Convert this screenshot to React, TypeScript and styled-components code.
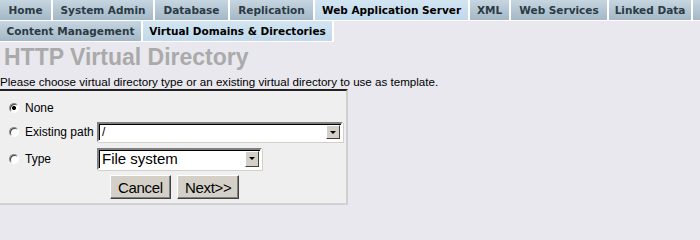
import React from "react";
import styled, { createGlobalStyle } from "styled-components";

const Global = createGlobalStyle`
  html, body { margin: 0; padding: 0; background: #e9e8ee; }
  body { font-family: "Liberation Sans", Arial, sans-serif; overflow: hidden; }
`;

const TabRow = styled.div`
  display: flex;
  height: 21px;
  white-space: nowrap;
  overflow: hidden;
`;

const Tab = styled.div<{ $active?: boolean; $w: number }>`
  flex: none;
  box-sizing: border-box;
  height: 21px;
  width: ${(p) => p.$w}px;
  text-align: center;
  line-height: 20px;
  font-family: "DejaVu Sans", Verdana, sans-serif;
  font-weight: bold;
  font-size: 10.5px;
  color: ${(p) => (p.$active ? "#000" : "#2b3a44")};
  border-right: 2px solid #fff;
  border-bottom: 1px solid #fff;
  overflow: hidden;
  background: ${(p) =>
    p.$active
      ? "linear-gradient(#d3e5f2, #c0d8ea)"
      : "linear-gradient(#c6d6e1, #a3b7c6)"};
`;

const Title = styled.h1`
  margin: 2px 0 0 4px;
  font-family: "Liberation Sans", Arial, sans-serif;
  font-size: 23px;
  font-weight: bold;
  color: #aaaaaa;
  line-height: 26px;
`;

const Intro = styled.p`
  margin: 5px 0 0 0;
  font-size: 11.6px;
  line-height: 14px;
  color: #000;
`;

const Box = styled.form`
  box-sizing: border-box;
  width: 348px;
  height: 116px;
  background: #efeff0;
  border-top: 2px solid #222;
  border-right: 2px solid #cfcfcf;
  border-bottom: 2px solid #d2d2d2;
  padding: 6px 0 0 9px;
  display: flex;
  flex-direction: column;
`;

const Row = styled.label<{ $h: number }>`
  display: flex;
  align-items: center;
  height: ${(p) => p.$h}px;
  font-size: 12px;
  color: #000;
`;

const Radio = styled.input.attrs({ type: "radio", name: "vdtype" })`
  appearance: none;
  margin: 0 6px 0 0;
  width: 10px;
  height: 10px;
  border-radius: 50%;
  box-sizing: border-box;
  border: 1px solid #8a8a8a;
  border-right-color: #fff;
  border-bottom-color: #fff;
  background: #fff;
  box-shadow: inset 1px 1px 0 #404040;
  flex: none;
  &:checked {
    background: radial-gradient(circle, #000 0 1.8px, #fff 2.3px);
  }
`;

const LabelText = styled.span`
  width: 72px;
  flex: none;
`;

const SelectWrap = styled.div<{ $w: number; $h: number }>`
  position: relative;
  box-sizing: border-box;
  width: ${(p) => p.$w}px;
  height: ${(p) => p.$h}px;
  background: #fff;
  border: 2px solid;
  border-color: #808080 #fff #fff #808080;
  box-shadow: inset 1px 1px 0 #000, 1px 1px 0 #d4d0c8;
`;

const Select = styled.select<{ $fs: number }>`
  appearance: none;
  border: none;
  outline: none;
  background: transparent;
  width: 100%;
  height: 100%;
  margin: 0;
  padding: 0 0 0 3px;
  font-family: "Liberation Sans", Arial, sans-serif;
  font-size: ${(p) => p.$fs}px;
  color: #000;
`;

const Arrow = styled.span`
  position: absolute;
  top: 1px;
  right: 1px;
  bottom: 1px;
  width: 14px;
  box-sizing: border-box;
  background: #d4d0c8;
  border: 1px solid;
  border-color: #fff #404040 #404040 #fff;
  display: flex;
  align-items: center;
  justify-content: center;
  pointer-events: none;
  &::after {
    content: "";
    border-left: 3px solid transparent;
    border-right: 3px solid transparent;
    border-top: 3px solid #000;
  }
`;

const Buttons = styled.div`
  display: flex;
  gap: 6px;
  margin: 3px 0 0 101px;
`;

const Button = styled.button`
  box-sizing: border-box;
  height: 24px;
  padding: 0 7px;
  background: #d4d0c8;
  border: 1px solid;
  border-color: #fff #404040 #404040 #fff;
  box-shadow: inset -1px -1px 0 #808080;
  font-family: "Liberation Sans", Arial, sans-serif;
  font-size: 15px;
  color: #000;
  letter-spacing: -0.3px;
`;

const row1 = [
  ["Home", 53],
  ["System Admin", 102],
  ["Database", 75],
  ["Replication", 85],
  ["Web Application Server", 155, true],
  ["XML", 41],
  ["Web Services", 98],
  ["Linked Data", 84],
  ["", 20],
] as [string, number, boolean?][];

const row2 = [
  ["Content Management", 143],
  ["Virtual Domains & Directories", 191, true],
] as [string, number, boolean?][];

export default function App() {
  return (
    <>
      <Global />
      <TabRow>
        {row1.map(([t, w, a], i) => (
          <Tab key={i} $w={w} $active={a}>
            {t}
          </Tab>
        ))}
      </TabRow>
      <TabRow>
        {row2.map(([t, w, a], i) => (
          <Tab key={i} $w={w} $active={a}>
            {t}
          </Tab>
        ))}
      </TabRow>
      <Title>HTTP Virtual Directory</Title>
      <Intro>
        Please choose virtual directory type or an existing virtual directory to use as template.
      </Intro>
      <Box onSubmit={(e) => e.preventDefault()}>
        <Row $h={22}>
          <Radio defaultChecked />
          <LabelText>None</LabelText>
        </Row>
        <Row $h={26}>
          <Radio />
          <LabelText>Existing path</LabelText>
          <SelectWrap $w={246} $h={20}>
            <Select $fs={12} defaultValue="/">
              <option value="/">/</option>
            </Select>
            <Arrow />
          </SelectWrap>
        </Row>
        <Row $h={27}>
          <Radio />
          <LabelText>Type</LabelText>
          <SelectWrap $w={165} $h={22}>
            <Select $fs={15} defaultValue="fs">
              <option value="fs">File system</option>
              <option value="web">WebDAV domain</option>
            </Select>
            <Arrow />
          </SelectWrap>
        </Row>
        <Buttons>
          <Button type="button">Cancel</Button>
          <Button type="submit">Next&gt;&gt;</Button>
        </Buttons>
      </Box>
    </>
  );
}
